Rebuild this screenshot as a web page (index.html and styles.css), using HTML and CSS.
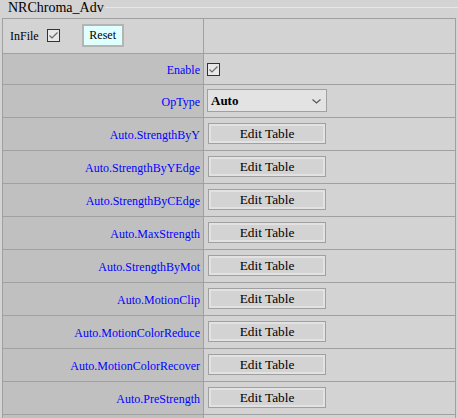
FILE: index.html
```html
<!DOCTYPE html>
<html>
<head>
<meta charset="utf-8">
<link rel="stylesheet" href="styles.css">
</head>
<body>
<div class="header">
  <span class="title">NRChroma_Adv</span>
  <span class="rule"></span>
</div>
<div class="panel">
  <div class="cell cell-file">
    <span class="file-label">InFile</span>
    <span class="check check-file"><svg width="13" height="13" viewBox="0 0 13 13"><rect x="0.5" y="0.5" width="12" height="12" fill="#e8e8e8" stroke="#333"/><path d="M2.5 6.5 L5 9 L10.5 3.5" fill="none" stroke="#666" stroke-width="1.1"/></svg></span>
    <button class="reset">Reset</button>
  </div>
  <div class="cell value"></div>

  <div class="cell label">Enable</div>
  <div class="cell value"><span class="check"><svg width="13" height="13" viewBox="0 0 13 13"><rect x="0.5" y="0.5" width="12" height="12" fill="#e8e8e8" stroke="#333"/><path d="M2.5 6.5 L5 9 L10.5 3.5" fill="none" stroke="#666" stroke-width="1.1"/></svg></span></div>

  <div class="cell label">OpType</div>
  <div class="cell value">
    <span class="select"><span class="select-text">Auto</span><svg class="chevron" width="9" height="5" viewBox="0 0 9 5"><path d="M0.5 0.5 L4.5 4 L8.5 0.5" fill="none" stroke="#555" stroke-width="1.1"/></svg></span>
  </div>

  <div class="cell label">Auto.StrengthByY</div>
  <div class="cell value"><button class="edit">Edit Table</button></div>

  <div class="cell label">Auto.StrengthByYEdge</div>
  <div class="cell value"><button class="edit">Edit Table</button></div>

  <div class="cell label">Auto.StrengthByCEdge</div>
  <div class="cell value"><button class="edit">Edit Table</button></div>

  <div class="cell label">Auto.MaxStrength</div>
  <div class="cell value"><button class="edit">Edit Table</button></div>

  <div class="cell label">Auto.StrengthByMot</div>
  <div class="cell value"><button class="edit">Edit Table</button></div>

  <div class="cell label">Auto.MotionClip</div>
  <div class="cell value"><button class="edit">Edit Table</button></div>

  <div class="cell label">Auto.MotionColorReduce</div>
  <div class="cell value"><button class="edit">Edit Table</button></div>

  <div class="cell label">Auto.MotionColorRecover</div>
  <div class="cell value"><button class="edit">Edit Table</button></div>

  <div class="cell label">Auto.PreStrength</div>
  <div class="cell value"><button class="edit">Edit Table</button></div>

  <div class="cell label"></div>
  <div class="cell value"></div>
</div>
</body>
</html>
```

FILE: styles.css
```css
html, body {
  margin: 0;
  padding: 0;
  background: #d3d3d3;
  font-family: "Liberation Serif", "Times New Roman", serif;
  color: #000;
  overflow: hidden;
}

.header {
  display: flex;
  align-items: flex-start;
  height: 18px;
  padding-left: 8px;
}

.title {
  font-size: 14px;
  line-height: 15px;
  white-space: nowrap;
}

.rule {
  flex: 1;
  height: 1px;
  margin-top: 7px;
  margin-left: 1px;
  background: #e6e6e6;
}

.panel {
  margin: 0 2px;
  display: grid;
  grid-template-columns: 200px 1fr;
  grid-template-rows: 34px 30px;
  grid-auto-rows: 32px;
  gap: 1px;
  padding: 1px;
  background: #a0a0a0;
}

.cell {
  display: flex;
  align-items: center;
  min-width: 0;
  background: #d3d3d3;
}

.label {
  justify-content: flex-end;
  padding-right: 3px;
  padding-top: 3px;
  background: #c0c0c0;
  color: #0000ff;
  font-size: 12px;
  white-space: nowrap;
}

.value {
  padding-left: 3px;
}

.cell-file {
  padding-left: 7px;
  font-size: 12px;
}

.file-label {
  margin-right: 8px;
}

.check {
  display: flex;
  width: 13px;
  height: 13px;
}

.check-file {
  margin-right: 22px;
  margin-bottom: 2px;
}

.reset {
  width: 42px;
  height: 23px;
  margin: 0 0 2px 0;
  padding: 0;
  border: 2px solid #b4b4b4;
  background: #e0ffff;
  font-family: "Liberation Serif", "Times New Roman", serif;
  font-size: 12px;
  color: #000;
}

.select {
  position: relative;
  display: flex;
  align-items: center;
  box-sizing: border-box;
  width: 120px;
  height: 23px;
  margin-bottom: 1px;
  padding-left: 3px;
  border: 1px solid #a0a0a0;
  background: #e3e3e3;
}

.select-text {
  font-size: 13px;
  font-weight: bold;
}

.chevron {
  position: absolute;
  right: 5px;
  top: 9px;
}

.edit {
  box-sizing: border-box;
  width: 118px;
  height: 21px;
  margin: 0 0 1px 1px;
  padding: 0;
  border: 1px solid #a0a0a0;
  background: #d3d3d3;
  box-shadow: inset 0 0 0 2px #e2e2e2;
  font-family: "Liberation Serif", "Times New Roman", serif;
  font-size: 13.33px;
  color: #000;
}
```
